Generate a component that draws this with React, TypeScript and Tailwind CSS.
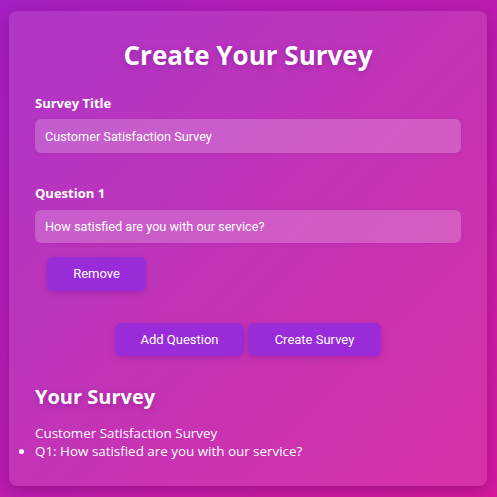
import React, { useState } from "react";

const heading = "font-['Open_Sans','Noto_Sans',sans-serif]";
const body = "font-['Roboto','Liberation_Sans',Arial,sans-serif]";

export default function App() {
  const [title, setTitle] = useState("Customer Satisfaction Survey");
  const [questions, setQuestions] = useState<string[]>(["How satisfied are you with our service?"]);

  return (
    <div className="w-[497px] h-[497px] bg-[linear-gradient(135deg,#a41fc2,#d41a9c)] p-[10px] pt-[11px]">
      <div className="h-[475px] w-[478px] -ml-[1px] rounded-lg bg-white/10 shadow-[0_4px_14px_rgba(80,0,80,0.35)] px-[26px] pt-[25px] text-white">
        <h1 className={`${heading} text-center text-[26px] font-bold leading-[39px] [text-shadow:0_2px_6px_rgba(90,0,120,0.35)]`}>
          Create Your Survey
        </h1>

        {/* survey title */}
        <label className={`${heading} mt-[18px] block text-[13px] font-bold leading-[20px]`}>Survey Title</label>
        <input
          value={title}
          onChange={(e) => setTitle(e.target.value)}
          className={`${body} mt-[6px] block h-[34px] w-full rounded-md bg-white/20 px-[10px] text-[12.7px] text-white outline-none shadow-[0_1px_4px_rgba(120,0,140,0.15)]`}
        />

        {/* questions */}
        {questions.map((q, i) => (
          <div key={i} className="mt-[30px]">
            <label className={`${heading} block text-[13px] font-bold leading-[20px]`}>Question {i + 1}</label>
            <input
              value={q}
              onChange={(e) => setQuestions(questions.map((x, j) => (j === i ? e.target.value : x)))}
              className={`${body} mt-[7px] block h-[33px] w-full rounded-md bg-white/20 px-[10px] text-[12.7px] text-white outline-none shadow-[0_1px_4px_rgba(120,0,140,0.15)]`}
            />
            <button
              onClick={() => setQuestions(questions.filter((_, j) => j !== i))}
              className={`${body} ml-[12px] mt-[14px] h-[34px] w-[99px] rounded-md bg-[#992bd8] text-[13px] text-white shadow-[0_2px_6px_rgba(90,0,140,0.25)]`}
            >
              Remove
            </button>
          </div>
        ))}

        <div className="mt-[32px] flex justify-center gap-[4px]">
          <button
            onClick={() => setQuestions([...questions, ""])}
            className={`${body} h-[33px] w-[129px] rounded-md bg-[#992bd8] text-[13px] text-white shadow-[0_2px_6px_rgba(90,0,140,0.25)]`}
          >
            Add Question
          </button>
          <button className={`${body} h-[33px] w-[133px] rounded-md bg-[#992bd8] text-[13px] text-white shadow-[0_2px_6px_rgba(90,0,140,0.25)]`}>
            Create Survey
          </button>
        </div>

        {/* preview */}
        <h2 className={`${heading} mt-[26px] text-[20px] font-bold leading-[30px] [text-shadow:0_2px_6px_rgba(90,0,120,0.35)]`}>
          Your Survey
        </h2>
        <p className={`${heading} mt-[12px] text-[13.4px] leading-[18px]`}>{title}</p>
        <ul className={`${heading} list-disc text-[13.4px] leading-[18px]`}>
          {questions.map((q, i) => (
            <li key={i}>Q{i + 1}: {q}</li>
          ))}
        </ul>
      </div>
    </div>
  );
}
